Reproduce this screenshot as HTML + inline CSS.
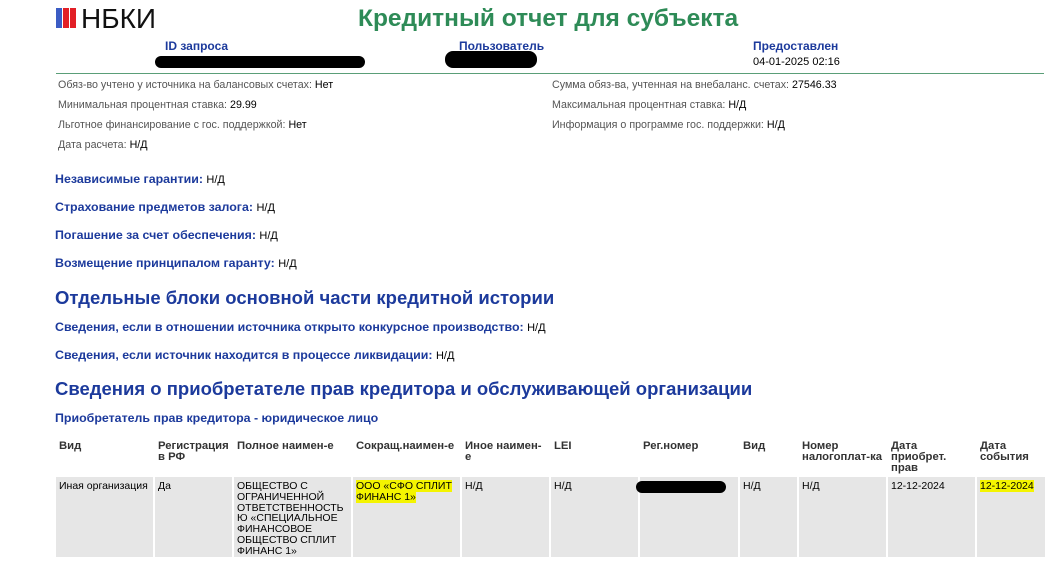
<!DOCTYPE html>
<html><head><meta charset="utf-8"><style>
*{margin:0;padding:0;box-sizing:border-box}
body{width:1063px;height:572px;background:#fff;font-family:"Liberation Sans",sans-serif;position:relative;overflow:hidden;color:#000}
.a{position:absolute;white-space:nowrap}
.g{color:#555;font-size:10.7px}
.b{color:#1c3a9c;font-weight:bold}
.h{color:#1c3a9c;font-size:18.5px;font-weight:bold}
.sub{font-size:12.4px}
.sub span{color:#000;font-weight:normal;font-size:11px}
.blk{position:absolute;background:#000;border-radius:8px}
td{background:#e6e6e6;vertical-align:top;font-size:10.5px;line-height:10.8px;padding:4px 3px 0;color:#000}
th{text-align:left;vertical-align:top;font-size:11.3px;line-height:11px;padding:5px 3px 0;color:#333;font-weight:bold;height:41px}
table{position:absolute;left:54px;top:436px;border-collapse:separate;border-spacing:2px 0}
.hl{background:#f4f400}
</style></head><body>
<div class="a" style="left:56px;top:8px;width:6px;height:20px;background:#3b5cc4"></div>
<div class="a" style="left:63px;top:8px;width:6px;height:20px;background:#e21f26"></div>
<div class="a" style="left:70px;top:8px;width:6px;height:20px;background:#e21f26"></div>
<div class="a" style="left:81px;top:3px;font-size:28px;color:#111">НБКИ</div>
<div class="a" style="left:358px;top:5px;font-size:24.5px;font-weight:bold;color:#2e8b57">Кредитный отчет для субъекта</div>
<div class="a b" style="left:165px;top:39px;font-size:12px">ID запроса</div>
<div class="a b" style="left:459px;top:39px;font-size:12px">Пользователь</div>
<div class="a b" style="left:753px;top:39px;font-size:12px">Предоставлен</div>
<div class="a" style="left:753px;top:56px;font-size:11px">04-01-2025 02:16</div>
<div class="blk" style="left:155px;top:56px;width:210px;height:12px"></div>
<div class="blk" style="left:445px;top:51px;width:92px;height:17px"></div>
<div class="a" style="left:56px;top:73px;width:988px;height:1px;background:#5a9e78"></div>
<div class="a g" style="left:58px;top:79px">Обяз-во учтено у источника на балансовых счетах: <span style="color:#000">Нет</span></div>
<div class="a g" style="left:58px;top:99px">Минимальная процентная ставка: <span style="color:#000">29.99</span></div>
<div class="a g" style="left:58px;top:119px">Льготное финансирование с гос. поддержкой: <span style="color:#000">Нет</span></div>
<div class="a g" style="left:58px;top:139px">Дата расчета: <span style="color:#000">Н/Д</span></div>
<div class="a g" style="left:552px;top:79px">Сумма обяз-ва, учтенная на внебаланс. счетах: <span style="color:#000">27546.33</span></div>
<div class="a g" style="left:552px;top:99px">Максимальная процентная ставка: <span style="color:#000">Н/Д</span></div>
<div class="a g" style="left:552px;top:119px">Информация о программе гос. поддержки: <span style="color:#000">Н/Д</span></div>
<div class="a b sub" style="left:55px;top:172px">Независимые гарантии: <span>Н/Д</span></div>
<div class="a b sub" style="left:55px;top:200px">Страхование предметов залога: <span>Н/Д</span></div>
<div class="a b sub" style="left:55px;top:228px">Погашение за счет обеспечения: <span>Н/Д</span></div>
<div class="a b sub" style="left:55px;top:256px">Возмещение принципалом гаранту: <span>Н/Д</span></div>
<div class="a h" style="left:55px;top:287px">Отдельные блоки основной части кредитной истории</div>
<div class="a b sub" style="left:55px;top:320px">Сведения, если в отношении источника открыто конкурсное производство: <span>Н/Д</span></div>
<div class="a b sub" style="left:55px;top:348px">Сведения, если источник находится в процессе ликвидации: <span>Н/Д</span></div>
<div class="a h" style="left:55px;top:378px">Сведения о приобретателе прав кредитора и обслуживающей организации</div>
<div class="a b sub" style="left:55px;top:411px">Приобретатель прав кредитора - юридическое лицо</div>
<table>
<tr><th style="width:97px">Вид</th><th style="width:77px">Регистрация в РФ</th><th style="width:117px">Полное наимен-е</th><th style="width:107px">Сокращ.наимен-е</th><th style="width:87px">Иное наимен-е</th><th style="width:87px">LEI</th><th style="width:98px">Рег.номер</th><th style="width:57px">Вид</th><th style="width:87px">Номер налогоплат-ка</th><th style="width:87px">Дата приобрет. прав</th><th style="width:68px">Дата события</th></tr>
<tr style="height:80px"><td>Иная организация</td><td>Да</td><td>ОБЩЕСТВО С ОГРАНИЧЕННОЙ ОТВЕТСТВЕННОСТЬ Ю «СПЕЦИАЛЬНОЕ ФИНАНСОВОЕ ОБЩЕСТВО СПЛИТ ФИНАНС 1»</td><td><span class="hl">ООО «СФО СПЛИТ ФИНАНС 1»</span></td><td>Н/Д</td><td>Н/Д</td><td></td><td>Н/Д</td><td>Н/Д</td><td>12-12-2024</td><td><span class="hl">12-12-2024</span></td></tr>
</table>
<div class="blk" style="left:636px;top:481px;width:90px;height:12px"></div>
</body></html>
